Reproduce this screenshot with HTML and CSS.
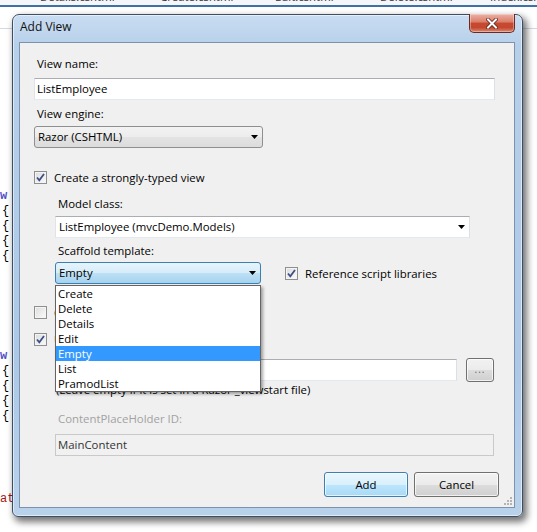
FILE: index.html
```html
<!DOCTYPE html>
<html lang="en">
<head>
  <meta charset="UTF-8">
  <title>Add View</title>
  <link rel="stylesheet" href="styles.css">
</head>
<body>
  <!-- IDE behind the dialog -->
  <div class="ide">
    <div class="tabs">
      <span>Details.cshtml</span>
      <span>Create.cshtml</span>
      <span>Edit.cshtml</span>
      <span>Delete.cshtml</span>
      <span>Index.cshtml</span>
    </div>
    <div class="toolbar"></div>
    <div class="editor">
      <div class="block">
        <div class="kw">w</div>
        <div class="br">{</div>
        <div class="br">{</div>
        <div class="br">{</div>
        <div class="br">{</div>
      </div>
      <div class="block second">
        <div class="kw">w</div>
        <div class="br">{</div>
        <div class="br">{</div>
        <div class="br">{</div>
        <div class="br">{</div>
      </div>
      <div class="block third">
        <div class="str">at</div>
      </div>
    </div>
  </div>

  <!-- Add View dialog -->
  <div class="window">
    <div class="titlebar">
      <span class="title">Add View</span>
      <div class="close">
        <svg width="12" height="11" viewBox="0 0 12 11">
          <path d="M2 1.5l8 8M10 1.5l-8 8" stroke="#5a2018" stroke-width="3.6" stroke-linecap="square"/>
          <path d="M2 1.5l8 8M10 1.5l-8 8" stroke="#fff" stroke-width="2" stroke-linecap="square"/>
        </svg>
      </div>
    </div>

    <div class="client">
      <div class="lbl first">View name:</div>
      <div class="textbox">ListEmployee</div>

      <div class="lbl">View engine:</div>
      <div class="combo plain engine">
        <span>Razor (CSHTML)</span>
        <svg class="arrow" width="7" height="4"><path d="M0 0h7L3.5 4z"/></svg>
      </div>

      <div class="check-row typed">
        <span class="cb checked"><svg width="9" height="9" viewBox="0 0 9 9"><path d="M1 4.5l2.3 2.8L8 1" fill="none" stroke="#3b5087" stroke-width="1.8"/></svg></span>
        <span>Create a strongly-typed view</span>
      </div>

      <div class="indent">
        <div class="lbl model">Model class:</div>
        <div class="combo white model-combo">
          <span>ListEmployee (mvcDemo.Models)</span>
          <svg class="arrow" width="7" height="4"><path d="M0 0h7L3.5 4z"/></svg>
        </div>

        <div class="lbl scaffold">Scaffold template:</div>
        <div class="scaffold-row">
          <div class="combo open">
            <span>Empty</span>
            <svg class="arrow" width="7" height="4"><path d="M0 0h7L3.5 4z"/></svg>
          </div>
          <div class="check-row inline">
            <span class="cb checked"><svg width="9" height="9" viewBox="0 0 9 9"><path d="M1 4.5l2.3 2.8L8 1" fill="none" stroke="#3b5087" stroke-width="1.8"/></svg></span>
            <span>Reference script libraries</span>
          </div>
        </div>
      </div>

      <div class="check-row partial">
        <span class="cb"></span>
        <span>Create as a partial view</span>
      </div>
      <div class="check-row layout">
        <span class="cb checked"><svg width="9" height="9" viewBox="0 0 9 9"><path d="M1 4.5l2.3 2.8L8 1" fill="none" stroke="#3b5087" stroke-width="1.8"/></svg></span>
        <span>Use a layout or master page:</span>
      </div>

      <div class="indent">
        <div class="layout-row">
          <div class="textbox layout-path"></div>
          <div class="btn browse">...</div>
        </div>
        <div class="hint">(Leave empty if it is set in a Razor _viewstart file)</div>

        <div class="lbl disabled">ContentPlaceHolder ID:</div>
        <div class="textbox off">MainContent</div>
      </div>

      <div class="actions">
        <div class="btn default">Add</div>
        <div class="btn">Cancel</div>
      </div>

      <!-- open scaffold list -->
      <ul class="dropdown">
        <li>Create</li>
        <li>Delete</li>
        <li>Details</li>
        <li>Edit</li>
        <li class="sel">Empty</li>
        <li>List</li>
        <li>PramodList</li>
      </ul>

      <svg class="grip" width="8" height="8" viewBox="0 0 8 8" fill="#b4b4b4">
        <rect x="6" y="0" width="2" height="2"/>
        <rect x="3" y="3" width="2" height="2"/><rect x="6" y="3" width="2" height="2"/>
        <rect x="0" y="6" width="2" height="2"/><rect x="3" y="6" width="2" height="2"/><rect x="6" y="6" width="2" height="2"/>
      </svg>
    </div>
  </div>
</body>
</html>
```

FILE: styles.css
```css
* { box-sizing:border-box; }
body { margin:0; width:537px; height:532px; overflow:hidden; position:relative; background:#fff; font-family:"Open Sans","Noto Sans",sans-serif; font-size:11.4px; color:#000; }

/* ide behind */
.tabs { height:7px; overflow:hidden; display:grid; grid-template-columns:120px 115px 105px 110px 1fr; padding-left:40px; background:#f4f6f9; border-bottom:2px solid #3f70a8; }
.tabs span { margin-top:-10px; line-height:14px; color:#333; white-space:nowrap; }
.toolbar { height:22px; border-bottom:1px solid #d5dae2; }
.editor { padding-top:160px; font-family:"Liberation Mono",monospace; font-size:12px; line-height:15px; }
.block.second { margin-top:85px; }
.block.third { margin-top:68px; }
.kw { color:#4d4fc8; font-weight:bold; }
.br { padding-left:2px; }
.str { color:#a31515; }

/* dialog frame */
.window { position:absolute; left:12px; top:14px; width:511px; height:503px; display:flex; flex-direction:column; border:1px solid #3e4e62; border-radius:7px 7px 6px 6px; background:linear-gradient(#c9ddf2, #b7d0ea 30px, #acc8e6 70%, #b9d2ec); box-shadow:inset 0 0 0 1px rgba(255,255,255,.55), 3px 4px 7px 1px rgba(0,0,0,.55); }
.titlebar { height:27px; display:flex; align-items:flex-start; padding:0 7px 0 7px; }
.title { margin-top:4px; font-size:12px; line-height:16px; color:#111; }
.close { margin-left:auto; margin-top:-1px; width:46px; height:19px; display:flex; align-items:center; justify-content:center; border:1px solid #6a2a22; border-top:none; border-radius:0 0 5px 5px; background:linear-gradient(#eab1a4, #dc7d6a 45%, #c8492f 50%, #c4472f 75%, #d98a70); box-shadow:inset 0 0 0 1px rgba(255,255,255,.35); }

.client { position:relative; flex:1; margin:0 7px 8px 6px; background:#f0f0f0; border:1px solid #7d93ad; padding:13px 19px 0 14px; }

/* controls */
.lbl { line-height:16px; padding-left:3px; margin-top:6px; }
.lbl.first { margin-top:0; }
.lbl.model { margin-top:11px; }
.lbl.scaffold { margin-top:5px; }
.lbl.disabled { margin-top:13px; color:#a2a2a2; }

.textbox { height:22px; margin-top:6px; padding:0 2px; line-height:20px; background:#fff; border:1px solid; border-color:#abadb3 #dbdfe6 #e3e9ef #e2e3ea; }
.textbox.off { margin-top:7px; width:439px; background:#f1f1f1; border-color:#c9c9c9; color:#333; }

.combo { height:22px; margin-top:4px; display:flex; align-items:center; justify-content:space-between; padding:0 4px 0 3px; line-height:20px; }
.combo .arrow { fill:#000; }
.combo.plain { width:229px; border:1px solid #8e8f8f; border-radius:3px; background:linear-gradient(#f3f3f3, #ececec 50%, #e3e3e3 51%, #dcdcdc); }
.combo.white { width:415px; background:#fff; border:1px solid; border-color:#abadb3 #dbdfe6 #e3e9ef #e2e3ea; }
.combo.open { width:206px; margin-top:0; border:1px solid #3c7fb1; border-radius:3px; background:linear-gradient(#e6f4fc, #d5ecf9 50%, #bde0f5 51%, #a6d3ef); }

.check-row { height:16px; display:flex; align-items:center; gap:7px; }
.check-row.typed { margin-top:21px; }
.check-row.partial { margin-top:20px; }
.check-row.layout { margin-top:11px; }
.check-row.inline { margin-left:24px; }
.cb { width:13px; height:13px; flex:none; display:flex; align-items:center; justify-content:center; border:1px solid #8e8f8f; background:linear-gradient(135deg, #dcdcdc, #fbfbfb); box-shadow:inset 0 0 0 1px #f4f4f4; }

.indent { margin-left:21px; }
.scaffold-row { margin-top:3px; display:flex; align-items:center; }

.layout-row { margin-top:11px; display:flex; align-items:center; }
.layout-row .textbox { margin-top:0; width:402px; }
.hint { line-height:16px; padding-left:1px; }

.btn { height:25px; display:flex; align-items:center; justify-content:center; border:1px solid #707070; border-radius:3px; background:linear-gradient(#f2f2f2, #ebebeb 50%, #dddddd 51%, #cfcfcf); box-shadow:inset 0 0 0 1px rgba(255,255,255,.7); }
.btn.browse { width:28px; height:24px; margin-left:9px; padding-bottom:3px; color:#666; font-size:10px; letter-spacing:1px; }
.btn.default { border-color:#3c7fb1; background:linear-gradient(#eaf6fd, #d9f0fc 50%, #bee6fd 51%, #a7d9f5); }

.actions { margin-top:16px; margin-right:-4px; display:flex; justify-content:flex-end; gap:6px; }
.actions .btn { width:85px; }
.actions .btn.default { width:84px; }

/* open scaffold list, drawn over the form */
.dropdown { position:absolute; left:35px; top:242px; width:206px; margin:0; padding:0; list-style:none; background:#fff; border:1px solid #646464; box-shadow:2px 2px 3px rgba(0,0,0,.35); }
.dropdown li { height:15px; line-height:15px; padding-left:2px; }
.dropdown li.sel { background:#3399ff; color:#fff; }

.grip { position:absolute; right:2px; bottom:2px; }
```
